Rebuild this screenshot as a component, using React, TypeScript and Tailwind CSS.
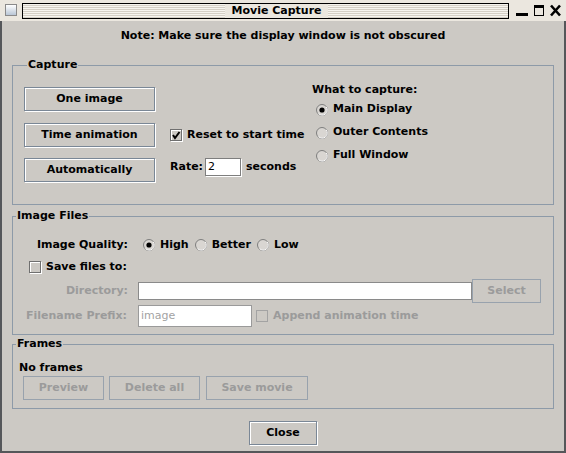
import React from "react";

const btn =
  "flex items-center justify-center h-[24px] border border-[#7a8796] shadow-[inset_1px_1px_0_#ffffff,1px_1px_0_#ffffff] text-black";
const btnOff =
  "flex items-center justify-center h-[24px] border border-[#98a2ad] text-[#9b9b9b]";

function Radio({ on }: { on?: boolean }) {
  return (
    <svg width="12" height="12" viewBox="0 0 12 12" className="shrink-0">
      <circle cx="6" cy="6" r="5.5" fill="#d9d6d2" stroke="#7e7e7e" />
      <path d="M2.5 9.5 A5 5 0 0 0 10 2.8" fill="none" stroke="#ffffff" />
      {on && <circle cx="6" cy="6" r="2.6" fill="#000" />}
    </svg>
  );
}

function Check({ on, off }: { on?: boolean; off?: boolean }) {
  return (
    <span
      className={
        "relative flex w-[12px] h-[12px] shrink-0 border " +
        (off
          ? "border-[#a3a3a3]"
          : "border-[#6f6f6f] shadow-[1px_1px_0_#ffffff,inset_1px_1px_0_#ffffff]")
      }
    >
      {on && (
        <svg width="10" height="10" viewBox="0 0 10 10">
          <path d="M2 5 L4 8 L8.5 2" fill="none" stroke="#000" strokeWidth="2" />
        </svg>
      )}
    </span>
  );
}

function Group({
  title,
  className,
  children,
}: {
  title: string;
  className?: string;
  children: React.ReactNode;
}) {
  return (
    <fieldset className={"border border-[#8d9aa8] " + (className ?? "")}>
      <legend className="ml-[3px] px-px leading-[14px]">{title}</legend>
      {children}
    </fieldset>
  );
}

function TitleBar() {
  return (
    <div className="flex h-[21px] items-start bg-[#ebe7df] pt-[3px]">
      <div className="ml-[5px] mt-px w-[12px] h-[12px] border border-[#8a8a8a] bg-[linear-gradient(to_bottom,#ffffff,#b9c6d6)]" />
      <div className="ml-[5px] flex h-[16px] w-[487px] items-center justify-center border border-black bg-[repeating-linear-gradient(to_bottom,#f6f4ef_0px,#f6f4ef_1px,#d5d0c6_1px,#d5d0c6_2px)] pl-[22px]">
        <span className="bg-[#ebe7df] px-[6px] leading-[14px]">Movie Capture</span>
      </div>
      <div className="ml-[6px] flex items-start gap-[4px] pt-px">
        <svg width="14" height="13" viewBox="0 0 14 13">
          <rect x="1" y="9" width="12" height="3" fill="#000" />
        </svg>
        <svg width="12" height="13" viewBox="0 0 12 13">
          <rect x="1.5" y="1.5" width="9" height="10" fill="none" stroke="#000" />
          <rect x="1" y="1" width="10" height="3" fill="#000" />
        </svg>
        <svg width="13" height="13" viewBox="0 0 13 13">
          <path d="M2 1.5 L11 11.5 M11 1.5 L2 11.5" stroke="#000" strokeWidth="2.6" />
        </svg>
      </div>
    </div>
  );
}

export default function App() {
  return (
    <div className="flex h-[453px] w-[566px] flex-col overflow-hidden bg-[#ccc9c4] font-['DejaVu_Sans',sans-serif] text-[11px] font-bold text-black select-none">
      <TitleBar />
      <div className="flex flex-1 flex-col border-x-2 border-b-2 border-[#55575a] px-[10px]">
        <p className="mt-[8px] text-center leading-[14px]">
          Note: Make sure the display window is not obscured
        </p>

        <Group title="Capture" className="mt-[15px] pl-[11px] pt-[10px] pb-[22px]">
          <div className="flex">
            <div className="mt-[5px] flex w-[131px] flex-col">
              <button className={btn}>One image</button>
              <button className={btn + " mt-[12px]"}>Time animation</button>
              <button className={btn + " mt-[11px]"}>Automatically</button>
            </div>
            <div className="ml-[15px] flex w-[142px] flex-col">
              <div className="mt-[46px] flex h-[14px] items-center gap-[5px]">
                <Check on />
                <span>Reset to start time</span>
              </div>
              <div className="mt-[16px] flex h-[18px] items-center">
                <span>Rate:</span>
                <span className="ml-[2px] flex h-[18px] w-[36px] items-center border border-[#7e7e7e] bg-white pl-[2px] font-normal shadow-[1px_1px_0_#ffffff]">
                  2
                </span>
                <span className="ml-[5px]">seconds</span>
              </div>
            </div>
            <div className="flex flex-col pt-px">
              <div className="h-[14px] leading-[14px]">What to capture:</div>
              {["Main Display", "Outer Contents", "Full Window"].map((t, i) => (
                <div
                  key={t}
                  className={
                    "flex h-[23px] items-center gap-[5px] pl-[4px]" + (i === 0 ? " mt-px" : "")
                  }
                >
                  <Radio on={i === 0} />
                  <span>{t}</span>
                </div>
              ))}
            </div>
          </div>
        </Group>

        <Group title="Image Files" className="mt-[4px] pt-[12px] pb-[7px]">
          <div className="flex h-[20px] items-center">
            <span className="w-[115px] text-right">Image Quality:</span>
            <div className="ml-[15px] flex items-center gap-[6px]">
              {["High", "Better", "Low"].map((t, i) => (
                <div key={t} className="flex items-center gap-[5px]">
                  <Radio on={i === 0} />
                  <span>{t}</span>
                </div>
              ))}
            </div>
          </div>
          <div className="mt-[2px] flex h-[20px] items-center gap-[5px] pl-[16px]">
            <Check />
            <span>Save files to:</span>
          </div>
          <div className="mt-[2px] flex h-[24px] items-center text-[#9b9b9b]">
            <span className="w-[115px] text-right">Directory:</span>
            <span className="ml-[10px] h-[18px] w-[334px] border border-[#8a8a8a] bg-white" />
            <button className={btnOff + " w-[69px]"}>Select</button>
          </div>
          <div className="mt-[2px] flex h-[22px] items-center text-[#9b9b9b]">
            <span className="w-[114px] text-right">Filename Prefix:</span>
            <span className="ml-[11px] flex h-[22px] w-[114px] items-center border border-[#9a9a9a] bg-white pl-[2px] font-normal text-[#a3a3a3]">
              image
            </span>
            <span className="ml-[4px] flex items-center gap-[5px]">
              <Check off />
              <span>Append animation time</span>
            </span>
          </div>
        </Group>

        <Group title="Frames" className="mt-[2px] pt-[10px] pb-[8px]">
          <div className="pl-[6px] leading-[14px]">No frames</div>
          <div className="mt-px flex pl-[10px]">
            <button className={btnOff + " w-[81px]"}>Preview</button>
            <button className={btnOff + " ml-[5px] w-[91px]"}>Delete all</button>
            <button className={btnOff + " ml-[6px] w-[102px]"}>Save movie</button>
          </div>
        </Group>

        <div className="mt-[12px] flex justify-center">
          <button className={btn + " w-[68px]"}>Close</button>
        </div>
      </div>
    </div>
  );
}
